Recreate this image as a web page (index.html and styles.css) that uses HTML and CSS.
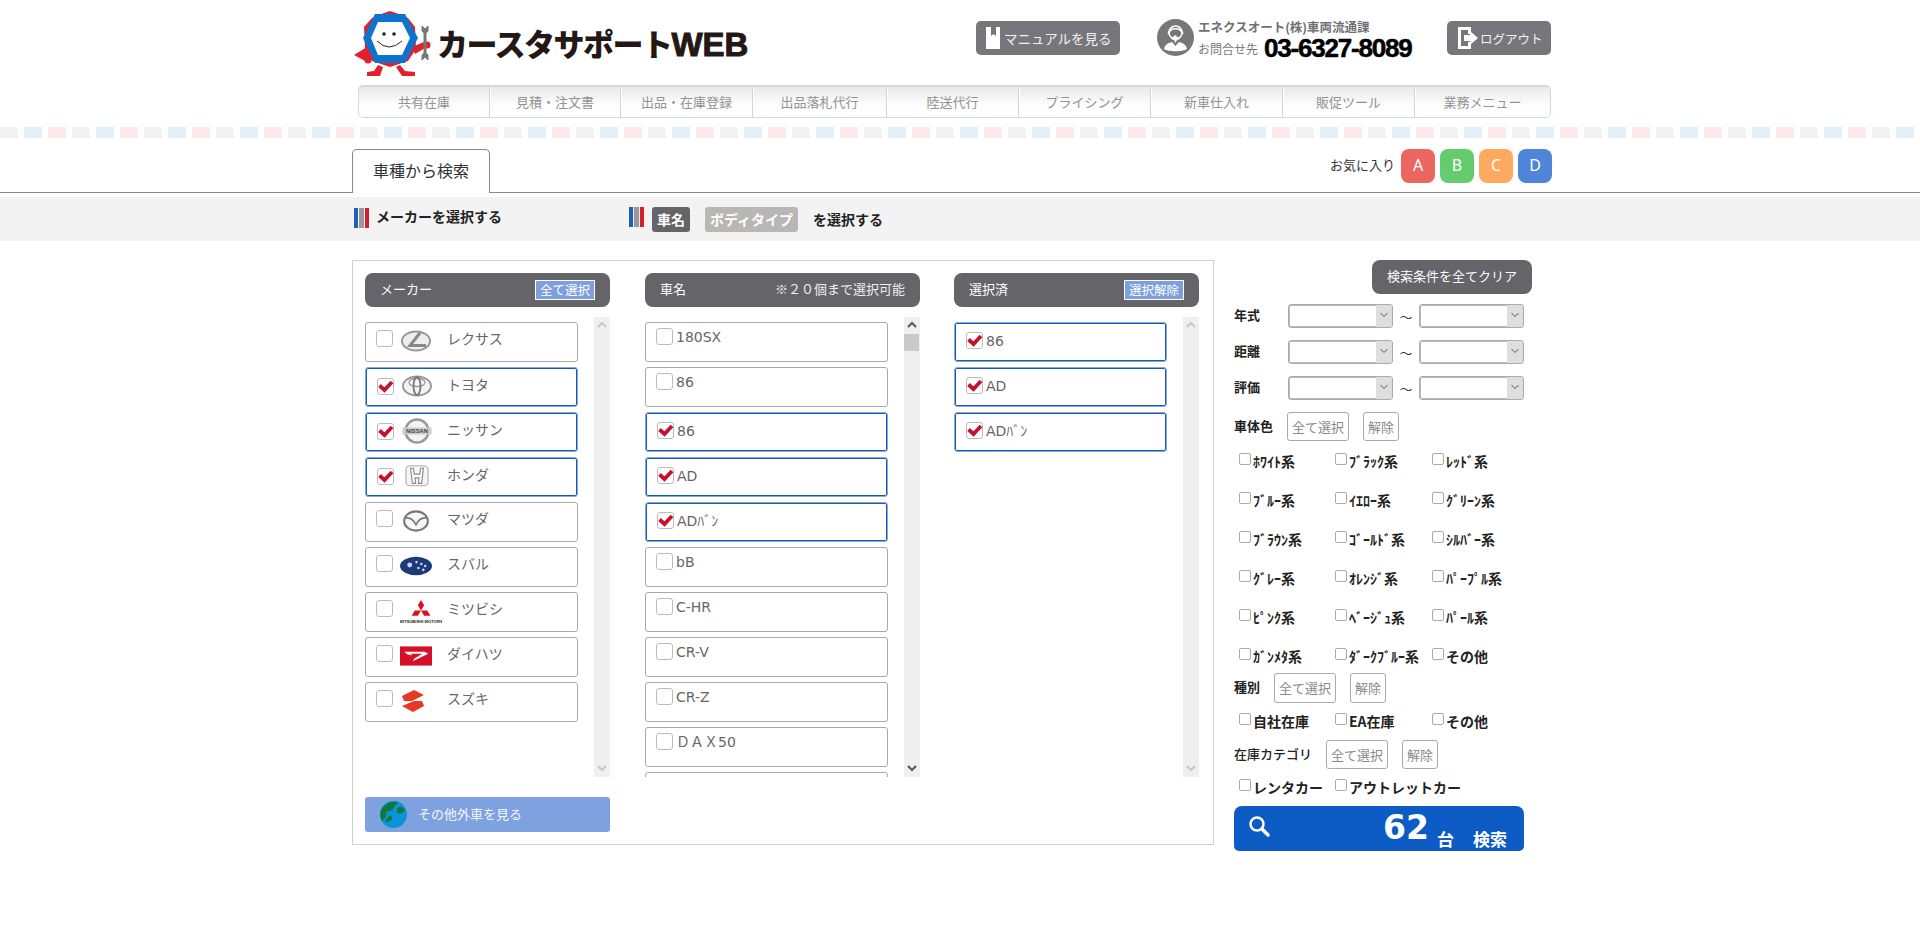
FILE: index.html
```html
<!DOCTYPE html>
<html lang="ja">
<head>
<meta charset="utf-8">
<title>カースタサポートWEB</title>
<link rel="stylesheet" href="styles.css">
</head>
<body>
<svg class="sprite" width="0" height="0">
  <symbol id="chk" viewBox="0 0 17 17"><path d="M2.500 7.500 L7.500 12 L15 4" fill="none" stroke="#c8102e" stroke-width="3.800"/></symbol>
  <symbol id="up" viewBox="0 0 10 8"><path d="M1 6 L5 2 L9 6" fill="none" stroke="currentColor" stroke-width="2"/></symbol>
  <symbol id="down" viewBox="0 0 10 8"><path d="M1 2 L5 6 L9 2" fill="none" stroke="currentColor" stroke-width="2"/></symbol>
  <symbol id="sel" viewBox="0 0 10 8"><path d="M1.500 2 L5 5.500 L8.500 2" fill="none" stroke="#555" stroke-width="1"/></symbol>
</svg>
<div class="wrap">
  <header class="hdr">
    <svg class="mark" viewBox="0 0 85 80" width="85" height="80">
      <path d="M34 8 L40 6 L46 8 L58 13 L65 22 L66 44 L58 56 L46 60 L40 62 L34 60 L22 56 L15 44 L14 22 L22 13 Z" fill="#e2202c"/>
      <path d="M17 42 L4 50 L17 57 L20 52 Z" fill="#e2202c"/><circle cx="18" cy="55" r="3.500" fill="#e2202c"/>
      <path d="M62 42 L74 37 L75 43 L65 49 Z" fill="#e2202c"/><circle cx="77" cy="40" r="3.500" fill="#e2202c"/>
      <path d="M28 60 L24 66 L17 67 L17 71 L30 71 L33 62 Z M50 60 L55 66 L65 67 L65 71 L52 71 L46 62 Z" fill="#e2202c"/>
      <path d="M25 9 H55 L68 33 L55 58 H25 L13 33 Z" fill="#0d74ce"/>
      <path d="M28 17 H52 L60 33 L52 50 H28 L21 33 Z" fill="#fff"/>
      <circle cx="34" cy="29" r="1.800" fill="#222"/><circle cx="44" cy="29" r="1.800" fill="#222"/>
      <path d="M27 36 Q39 48 52 36" fill="none" stroke="#222" stroke-width="1"/>
      <path d="M72 21 V26 L74 28 V48 L72 50 V55 L75 52 L78 55 V50 L76 48 V28 L78 26 V21 L75 24 Z" fill="#777" stroke="#777"/>
    </svg>
    <div class="brand">カースタサポート<span class="brand-en">WEB</span></div>
    <div class="tools">
      <a class="btn-dark btn-manual">
        <svg width="16" height="24" viewBox="0 0 16 24"><path d="M1 1 H15 V23 H1 Z" fill="#fff"/><path d="M6 1 H11 V10 L8.500 8 L6 10 Z" fill="#77777b"/></svg>
        <span>マニュアルを見る</span>
      </a>
      <div class="contact">
        <svg class="contact-ic" width="37" height="37" viewBox="0 0 37 37"><circle cx="18.500" cy="18.500" r="18.500" fill="#77777b"/><circle cx="18.500" cy="13.500" r="6.500" fill="none" stroke="#fff" stroke-width="1.500"/><path d="M11 15 A8 8 0 0 1 26 15" fill="none" stroke="#fff" stroke-width="1.500"/><path d="M18 16 L14 20 L17 21 L18.500 24 L20 21 L23 20 Z" fill="#fff"/><path d="M7 30 C8 25 12 24 15 23 L18.500 27 L22 23 C25 24 29 25 30 30 C26 33 11 33 7 30 Z" fill="#fff"/></svg>
        <div class="contact-text">
          <div class="contact-co">エネクスオート(株)車両流通課</div>
          <div class="contact-line"><span class="contact-lbl">お問合せ先</span><span class="phone">03-6327-8089</span></div>
        </div>
      </div>
      <a class="btn-dark btn-logout">
        <svg width="22" height="24" viewBox="0 0 22 24"><path d="M1 1 H14 V8 H11 V4 H4 V20 H11 V16 H14 V23 H1 Z" fill="#fff"/><path d="M7 9 H13 V5 L21 12 L13 19 V15 H7 Z" fill="#fff"/></svg>
        <span>ログアウト</span>
      </a>
    </div>
  </header>
  <nav class="nav">
    <a>共有在庫</a><a>見積・注文書</a><a>出品・在庫登録</a><a>出品落札代行</a><a>陸送代行</a><a>プライシング</a><a>新車仕入れ</a><a>販促ツール</a><a>業務メニュー</a>
  </nav>
</div>
<div class="strip"></div>
<div class="tabbar">
  <div class="wrap tabrow">
    <div class="tab">車種から検索</div>
    <div class="favs">
      <span class="fav-lbl">お気に入り</span>
      <a class="fav fav-a">A</a><a class="fav fav-b">B</a><a class="fav fav-c">C</a><a class="fav fav-d">D</a>
    </div>
  </div>
</div>
<div class="band">
  <div class="wrap band-in">
    <div class="band-l"><i class="flag"><b></b><b></b><b></b></i><span>メーカーを選択する</span></div>
    <div class="band-r"><i class="flag"><b></b><b></b><b></b></i><span class="badge badge-on">車名</span><span class="badge badge-off">ボディタイプ</span><span class="band-end">を選択する</span></div>
  </div>
</div>
<main class="wrap main">
  <section class="panel">
    <div class="col col-maker">
      <div class="col-h"><span>メーカー</span><a class="mini">全て選択</a></div>
      <div class="col-b">
        <div class="list">
          <div class="item"><i class="cb"></i>
            <svg class="lg" viewBox="0 0 30 22"><ellipse cx="15" cy="11" rx="14" ry="9.500" fill="#eee" stroke="#999" stroke-width="2"/><path d="M19 3 L9 15.500 H25" fill="none" stroke="#888" stroke-width="3"/></svg>
            <span class="nm">レクサス</span></div>
          <div class="item on"><i class="cb"><svg><use href="#chk"/></svg></i>
            <svg class="lg" viewBox="0 0 30 22"><ellipse cx="15" cy="11" rx="14" ry="9.500" fill="#f4f4f4" stroke="#999" stroke-width="2"/><ellipse cx="15" cy="7.500" rx="8" ry="4" fill="none" stroke="#999" stroke-width="1.300"/><ellipse cx="15" cy="11" rx="3.500" ry="9" fill="none" stroke="#777" stroke-width="1.800"/></svg>
            <span class="nm">トヨタ</span></div>
          <div class="item on"><i class="cb"><svg><use href="#chk"/></svg></i>
            <svg class="lg lg-tall" viewBox="0 0 30 26"><circle cx="15" cy="13" r="11.500" fill="#f4f4f4" stroke="#999" stroke-width="2.500"/><rect x="0.500" y="9.500" width="29" height="7" fill="#ccc"/><text x="15" y="15" class="lg-t">NISSAN</text></svg>
            <span class="nm">ニッサン</span></div>
          <div class="item on"><i class="cb"><svg><use href="#chk"/></svg></i>
            <svg class="lg" viewBox="0 0 30 24"><rect x="3" y="1" width="24" height="21.500" rx="4" fill="#f6f6f6" stroke="#bbb" stroke-width="1.500"/><path d="M8 3.500 L10 20 H13.500 L12.800 14 H17.200 L16.500 20 H20 L22 3.500 H19 L18 10 H12 L11 3.500 Z" fill="#fff" stroke="#888" stroke-width="1.200"/></svg>
            <span class="nm">ホンダ</span></div>
          <div class="item"><i class="cb"></i>
            <svg class="lg" viewBox="0 0 30 24"><ellipse cx="15" cy="12" rx="13" ry="10.500" fill="#f6f6f6" stroke="#777" stroke-width="2.200"/><path d="M3.500 9 Q10 7 15 16 Q20 7 26.500 9" fill="none" stroke="#777" stroke-width="1.800"/></svg>
            <span class="nm">マツダ</span></div>
          <div class="item"><i class="cb"></i>
            <svg class="lg" viewBox="0 0 33 22"><ellipse cx="16.500" cy="11" rx="16.500" ry="9.500" fill="#1b3a7a"/><circle cx="10" cy="10" r="2.500" fill="#cdd6ea"/><circle cx="17" cy="7" r="1.300" fill="#cdd6ea"/><circle cx="22" cy="9" r="1.300" fill="#cdd6ea"/><circle cx="26" cy="11" r="1.300" fill="#cdd6ea"/><circle cx="19" cy="13" r="1.300" fill="#cdd6ea"/><circle cx="24" cy="15" r="1.300" fill="#cdd6ea"/></svg>
            <span class="nm">スバル</span></div>
          <div class="item"><i class="cb"></i>
            <svg class="lg lg-mit" viewBox="0 0 40 24"><path d="M20 0 L23 5 L20 10 L17 5 Z M20 10 L14 10 L11 15 L17 15 Z M20 10 L26 10 L29 15 L23 15 Z" fill="#e01020"/><text x="20" y="22.500" class="lg-m">MITSUBISHI MOTORS</text></svg>
            <span class="nm">ミツビシ</span></div>
          <div class="item"><i class="cb"></i>
            <svg class="lg" viewBox="0 0 30 20"><rect width="30" height="18" y="1" fill="#d7102a"/><path d="M4 6 H23 L26.500 8 L12 15 L15 10 L7 8.500 Z" fill="#fff"/><path d="M10 8 H21 L14 12 Z" fill="#d7102a"/></svg>
            <span class="nm">ダイハツ</span></div>
          <div class="item"><i class="cb"></i>
            <svg class="lg" viewBox="0 0 30 22"><path d="M13 0 L23 5 L11 11 L21 11 L23 16 L12 22 L1 16 L13 11 L3 11 L1 6 Z" fill="#e8381f"/></svg>
            <span class="nm">スズキ</span></div>
        </div>
        <div class="sb sb-dim"><svg><use href="#up"/></svg><svg><use href="#down"/></svg></div>
      </div>
      <a class="other">
        <svg width="27" height="27" viewBox="0 0 27 27"><circle cx="13.500" cy="13.500" r="13.500" fill="#0a93d6"/><path d="M4 5 C8 1 14 0 18 1 C17 4 14 5 13 8 C11 11 8 9 6 12 C7 15 5 18 2 20 C-1 15 0 9 4 5 Z M17 7 C20 5 23 6 25 9 C23 12 20 13 17 12 Z M9 15 C12 14 13 17 11 19 C9 21 6 22 5 20 Z" fill="#0d7a3c"/></svg>
        <span>その他外車を見る</span>
      </a>
    </div>
    <div class="col col-car">
      <div class="col-h"><span>車名</span><span class="note">※２０個まで選択可能</span></div>
      <div class="col-b">
        <div class="list">
          <div class="item"><i class="cb"></i><span class="nm">180SX</span></div>
          <div class="item"><i class="cb"></i><span class="nm">86</span></div>
          <div class="item on"><i class="cb"><svg><use href="#chk"/></svg></i><span class="nm">86</span></div>
          <div class="item on"><i class="cb"><svg><use href="#chk"/></svg></i><span class="nm">AD</span></div>
          <div class="item on"><i class="cb"><svg><use href="#chk"/></svg></i><span class="nm">ADﾊﾞﾝ</span></div>
          <div class="item"><i class="cb"></i><span class="nm">bB</span></div>
          <div class="item"><i class="cb"></i><span class="nm">C-HR</span></div>
          <div class="item"><i class="cb"></i><span class="nm">CR-V</span></div>
          <div class="item"><i class="cb"></i><span class="nm">CR-Z</span></div>
          <div class="item"><i class="cb"></i><span class="nm">ＤＡＸ50</span></div>
          <div class="item"><i class="cb"></i></div>
        </div>
        <div class="sb"><svg><use href="#up"/></svg><i class="thumb"></i><svg class="sb-end"><use href="#down"/></svg></div>
      </div>
    </div>
    <div class="col col-sel">
      <div class="col-h"><span>選択済</span><a class="mini">選択解除</a></div>
      <div class="col-b">
        <div class="list">
          <div class="item on"><i class="cb"><svg><use href="#chk"/></svg></i><span class="nm">86</span></div>
          <div class="item on"><i class="cb"><svg><use href="#chk"/></svg></i><span class="nm">AD</span></div>
          <div class="item on"><i class="cb"><svg><use href="#chk"/></svg></i><span class="nm">ADﾊﾞﾝ</span></div>
        </div>
        <div class="sb sb-dim"><svg><use href="#up"/></svg><svg><use href="#down"/></svg></div>
      </div>
    </div>
  </section>
  <aside class="side">
    <div class="clear-row"><a class="clear">検索条件を全てクリア</a></div>
    <div class="range"><span class="lbl">年式</span><div class="sel"><select></select><i class="sel-a"><svg><use href="#sel"/></svg></i></div><span class="tilde">～</span><div class="sel"><select></select><i class="sel-a"><svg><use href="#sel"/></svg></i></div></div>
    <div class="range"><span class="lbl">距離</span><div class="sel"><select></select><i class="sel-a"><svg><use href="#sel"/></svg></i></div><span class="tilde">～</span><div class="sel"><select></select><i class="sel-a"><svg><use href="#sel"/></svg></i></div></div>
    <div class="range"><span class="lbl">評価</span><div class="sel"><select></select><i class="sel-a"><svg><use href="#sel"/></svg></i></div><span class="tilde">～</span><div class="sel"><select></select><i class="sel-a"><svg><use href="#sel"/></svg></i></div></div>
    <div class="act act-color"><span class="lbl lbl-c">車体色</span><a class="ghost">全て選択</a><a class="ghost">解除</a></div>
    <div class="grid grid-color">
      <label class="ck"><i></i>ﾎﾜｲﾄ系</label><label class="ck"><i></i>ﾌﾞﾗｯｸ系</label><label class="ck"><i></i>ﾚｯﾄﾞ系</label>
      <label class="ck"><i></i>ﾌﾞﾙｰ系</label><label class="ck"><i></i>ｲｴﾛｰ系</label><label class="ck"><i></i>ｸﾞﾘｰﾝ系</label>
      <label class="ck"><i></i>ﾌﾞﾗｳﾝ系</label><label class="ck"><i></i>ｺﾞｰﾙﾄﾞ系</label><label class="ck"><i></i>ｼﾙﾊﾞｰ系</label>
      <label class="ck"><i></i>ｸﾞﾚｰ系</label><label class="ck"><i></i>ｵﾚﾝｼﾞ系</label><label class="ck"><i></i>ﾊﾟｰﾌﾟﾙ系</label>
      <label class="ck"><i></i>ﾋﾟﾝｸ系</label><label class="ck"><i></i>ﾍﾞｰｼﾞｭ系</label><label class="ck"><i></i>ﾊﾟｰﾙ系</label>
      <label class="ck"><i></i>ｶﾞﾝﾒﾀ系</label><label class="ck"><i></i>ﾀﾞｰｸﾌﾞﾙｰ系</label><label class="ck"><i></i>その他</label>
    </div>
    <div class="act act-kind"><span class="lbl lbl-k">種別</span><a class="ghost">全て選択</a><a class="ghost">解除</a></div>
    <div class="grid grid-one">
      <label class="ck"><i></i>自社在庫</label><label class="ck"><i></i>EA在庫</label><label class="ck"><i></i>その他</label>
    </div>
    <div class="act act-cat"><span class="lbl lbl-s">在庫カテゴリ</span><a class="ghost">全て選択</a><a class="ghost">解除</a></div>
    <div class="grid grid-one">
      <label class="ck"><i></i>レンタカー</label><label class="ck ck-wide"><i></i>アウトレットカー</label>
    </div>
    <a class="search">
      <svg width="22" height="22" viewBox="0 0 22 22"><circle cx="9" cy="9" r="6.500" fill="none" stroke="#fff" stroke-width="2.500"/><path d="M14 14 L20 20" stroke="#fff" stroke-width="3.500" stroke-linecap="round"/></svg>
      <span class="count">62</span><span class="unit">台</span><span class="go">検索</span>
    </a>
  </aside>
</main>
</body>
</html>
```
FILE: styles.css
```css
* { box-sizing: border-box; }
html, body { margin: 0; padding: 0; background: #fff; }
body { font-family: "Noto Sans CJK JP", "Noto Sans", sans-serif; font-size: 13px; color: #222; height: 943px; overflow: hidden; }
a { display: block; cursor: pointer; }
i { font-style: normal; display: block; }
.sprite { position: absolute; }
.wrap { width: 1200px; margin-left: 352px; }

.hdr { display: flex; height: 85px; align-items: flex-start; }
.mark { margin: 5px 0 0 -2px; flex: none; }
.brand { margin: 22px 0 0 2px; font-size: 31px; line-height: 42px; font-weight: 900; color: #231815; letter-spacing: -1.500px; white-space: nowrap; }
.brand-en { font-family: "Liberation Sans", sans-serif; font-weight: 700; font-size: 33px; letter-spacing: 0; -webkit-text-stroke: 1px #231815; }
.tools { margin-left: auto; margin-right: 1px; display: flex; align-items: flex-start; padding-top: 19px; }
.btn-dark { display: flex; align-items: center; height: 34px; margin-top: 2px; background: #77777b; border-radius: 5px; color: #f2f2f2; font-size: 13.500px; flex: none; }
.btn-manual { width: 144px; padding-left: 9px; gap: 3px; }
.btn-logout { width: 104px; margin-left: 35px; padding-left: 10px; gap: 1px; font-size: 12.500px; }
.contact { display: flex; margin-left: 37px; gap: 4px; width: 255px; flex: none; }
.contact-ic { flex: none; }
.contact-text { margin-top: -1px; flex: none; white-space: nowrap; }
.contact-co { font-size: 12.500px; font-weight: 700; color: #707074; line-height: 18px; }
.contact-line { display: flex; align-items: center; height: 24px; gap: 6px; }
.contact-lbl { font-size: 12px; color: #77777b; flex: none; }
.phone { font-family: "Liberation Sans", sans-serif; font-size: 26px; font-weight: 700; letter-spacing: -1.200px; color: #000; -webkit-text-stroke: 0.500px #000; line-height: 24px; flex: none; }

.nav { height: 33px; width: 1193px; margin-left: 6px; display: grid; grid-template-columns: 130px 131px 132px 134px 132px 132px 132px 132px 1fr; border: 1px solid #d8d8d8; border-top-width: 2px; border-radius: 5px; background: linear-gradient(#e9e9ec 0, #fdfdfd 60%, #fff 100%); overflow: hidden; }
.nav a { text-align: center; color: #929292; font-size: 13px; line-height: 30px; border-left: 1px solid #d4d4d4; box-shadow: inset 1px 0 0 #fff; }
.nav a:first-child { border-left: 0; box-shadow: none; }

.strip { height: 11px; margin-top: 9px; background-image: linear-gradient(90deg, #f2f2f2 0 18px, transparent 18px 24px, #e3f0f8 24px 42px, transparent 42px 48px, #fde8ea 48px 66px, transparent 66px 72px); background-size: 72px 11px; }

.tabbar { margin-top: 11px; border-bottom: 1px solid #888; height: 44px; }
.tabrow { display: flex; height: 44px; }
.tab { width: 138px; height: 44px; background: #fff; border: 1px solid #888; border-bottom: 0; border-radius: 5px 5px 0 0; text-align: center; font-size: 16px; line-height: 40px; color: #333; }
.favs { margin-left: auto; display: flex; align-items: flex-start; gap: 5px; }
.fav-lbl { font-size: 13px; line-height: 32px; color: #333; margin-right: 1px; }
.fav { width: 34px; height: 34px; border-radius: 8px; color: #fff; text-align: center; font-size: 16px; line-height: 32px; font-family: "Noto Sans", sans-serif; }
.fav-a { background: #ec6660; }
.fav-b { background: #65cc6d; }
.fav-c { background: #ffa860; }
.fav-d { background: #4f85d8; }

.band { margin-top: 4px; height: 44px; background: #f3f3f3; }
.band-in { display: flex; font-size: 14px; font-weight: 700; color: #222; }
.band-l { display: flex; gap: 7px; width: 277px; padding: 11px 0 0 2px; line-height: 17px; }
.band-r { display: flex; padding-top: 10px; align-items: flex-start; }
.flag { display: flex; gap: 1px; width: 15px; height: 20px; }
.flag b { flex: 1; background: #999; }
.flag b:first-child { background: #1f5fc0; }
.flag b:last-child { background: #d3202c; }
.band-r .flag { margin-right: 8px; }
.badge { height: 25px; line-height: 24px; padding: 0 5px; border-radius: 3px; color: #fff; margin-right: 15px; }
.badge-on { background: #656469; }
.badge-off { background: #b9b6b6; }
.band-end { line-height: 25px; }

.main { display: flex; margin-top: 19px; }
.panel { width: 862px; height: 585px; border: 1px solid #d0d0d0; padding: 12px; display: flex; flex: none; }
.col { flex: none; width: 245px; }
.col-car { width: 275px; margin: 0 34px 0 35px; }
.col-h { height: 34px; background: #656469; border-radius: 8px; padding: 0 15px 1px 15px; display: flex; justify-content: space-between; align-items: center; color: #fff; font-size: 13px; line-height: 18px; }
.col-h span { position: relative; top: -1px; }
.mini { width: 60px; height: 20px; line-height: 18px; text-align: center; background: #7d9fdc; border: 1px solid #fff; font-size: 12.500px; }
.note { font-size: 13px; color: #eee; }
.col-b { margin-top: 10px; height: 460px; display: flex; justify-content: space-between; }
.list { width: 213px; height: 460px; overflow: hidden; padding-top: 5px; }
.col-car .list { width: 243px; }
.item { height: 40px; margin-bottom: 5px; border: 1px solid #aaa; border-radius: 3px; display: flex; align-items: flex-start; padding-left: 10px; color: #666; background: #fff; }
.item.on { border-color: #8fa7c9; box-shadow: inset 0 0 0 1px #0d5bc4; }
.cb { position: relative; flex: none; width: 17px; height: 17px; margin-top: 7px; border: 1px solid #bbb; border-radius: 3px; background: #fff; }
.cb svg { position: absolute; left: -1px; top: -1px; width: 17px; height: 17px; }
.on .cb { margin: 10px 0 0 1px; }
.col-car .cb { margin-top: 5px; }
.col-car .on .cb { margin-top: 9px; }
.col-sel .on .cb { margin-top: 9px; }
.nm { font-family: "DejaVu Sans", "Noto Sans CJK JP", sans-serif; font-size: 14px; line-height: 20px; white-space: nowrap; margin: 5px 0 0 3px; }
.col-car .nm, .col-sel .nm { margin-top: 4px; }
.col-car .on .nm, .col-sel .on .nm { margin-top: 8px; }
.col-maker .nm { font-family: "Noto Sans CJK JP", sans-serif; margin: 5px 0 0 -2px; }
.col-maker .on .nm { margin-top: 6px; }
.lg { flex: none; width: 32px; height: 22px; margin: 7px 17px 0 7px; }
.on .lg { margin-left: 7px; margin-right: 16px; }
.lg-tall { height: 26px; margin-top: 5px; }
.lg-mit { width: 42px; height: 25px; margin: 7px 7px 0 7px; }
.lg-t { font-family: "Liberation Sans", sans-serif; font-size: 5.800px; font-weight: 700; text-anchor: middle; fill: #444; }
.lg-m { font-family: "Liberation Sans", sans-serif; font-size: 4px; font-weight: 700; text-anchor: middle; fill: #222; }
.sb { width: 16px; height: 460px; background: #efefef; display: flex; flex-direction: column; color: #555; position: relative; align-items: center; justify-content: space-between; padding: 4px 0 5px; }
.sb svg { width: 10px; height: 8px; }
.sb-dim { color: #c8c8c8; }
.thumb { position: absolute; left: 0; top: 17px; width: 15px; height: 17px; background: #c9c9c9; }
.other { display: flex; align-items: center; gap: 11px; height: 35px; margin-top: 20px; padding-left: 15px; background: #7ea2df; border-radius: 3px; color: #f4f7fd; font-size: 13px; }
.other svg { flex: none; }
.other span { position: relative; top: -1px; }

.side { margin-left: 20px; width: 298px; flex: none; }
.clear-row { display: flex; justify-content: flex-end; height: 44px; }
.clear { width: 160px; height: 34px; line-height: 32px; text-align: center; background: #656469; color: #fff; border-radius: 8px; font-size: 13px; }
.range { display: flex; align-items: center; height: 24px; margin-bottom: 12px; }
.lbl { font-weight: 700; font-size: 13px; color: #222; line-height: 18px; padding-bottom: 2px; }
.range .lbl { width: 54px; }
.sel { width: 105px; height: 24px; border: 1px solid #aaa; box-shadow: inset 0 0 0 1px #bbb; border-radius: 3px; display: flex; background: #fff; overflow: hidden; }
.sel select { flex: 1; min-width: 0; appearance: none; border: 0; background: transparent; outline: 0; }
.sel-a { width: 16px; flex: none; background: #dedede; display: flex; align-items: center; justify-content: center; padding-bottom: 3px; }
.sel-a svg { width: 10px; height: 8px; }
.tilde { width: 26px; text-align: center; font-size: 13px; color: #333; }
.act { display: flex; align-items: center; height: 29px; }
.ghost { height: 29px; line-height: 27px; border: 1px solid #aaa; border-radius: 3px; background: #fff; color: #888; font-size: 13px; padding: 0 4px; }
.ghost + .ghost { margin-left: 14px; }
.lbl-c { width: 53px; }
.lbl-k { width: 40px; }
.lbl-s { width: 92px; font-weight: 500; }
.act-kind { margin-top: 5px; height: 30px; }
.act-kind .ghost { height: 30px; line-height: 28px; }
.grid { display: grid; grid-template-columns: 96px 97px 100px; padding-left: 5px; }
.grid-color { margin-top: 2px; grid-template-rows: repeat(5, 39px) 30px; }
.grid-one { height: 37px; }
.ck { display: flex; align-items: flex-start; font-size: 14px; font-weight: 700; color: #222; line-height: 20px; white-space: nowrap; padding-top: 8px; gap: 2px; }
.ck i { width: 12px; height: 12px; margin-top: 2px; border: 1px solid #aaa; border-radius: 2px; background: #fff; flex: none; }
.search { display: flex; align-items: flex-end; height: 45px; width: 290px; background: #0d5bc4; border-radius: 8px 8px 5px 5px; color: #fff; font-weight: 700; padding: 0 16px 0 14px; }
.search svg { align-self: flex-start; margin-top: 9px; flex: none; }
.search span { flex: none; white-space: nowrap; }
.count { font-family: "DejaVu Sans", sans-serif; font-size: 33px; line-height: 46px; margin-left: 113px; }
.unit { font-size: 17px; line-height: 24px; margin-left: 8px; }
.go { font-size: 17px; line-height: 24px; margin-left: 19px; }
```
